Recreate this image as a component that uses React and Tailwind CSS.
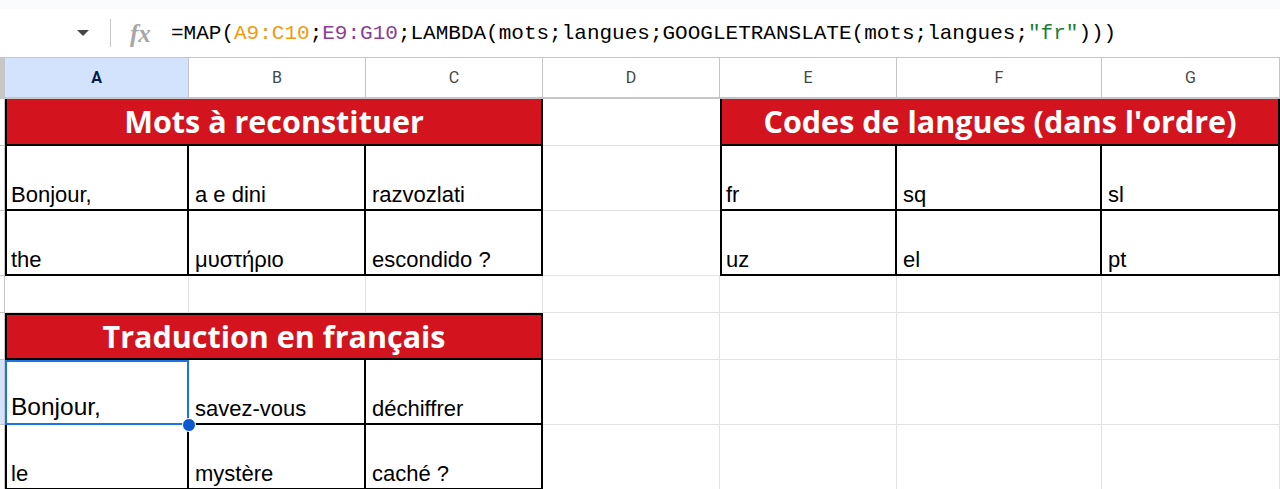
const cols = ["A", "B", "C", "D", "E", "F", "G"];

function Head({ label, active }) {
  return (
    <div
      className={`flex items-center justify-center border-t border-r border-b-2 border-[#c4c7c5] text-[16px] ${
        active ? "bg-[#d3e3fd] text-[#041e49] font-bold" : "bg-white text-[#444746]"
      }`}
      style={{ fontFamily: "Roboto, sans-serif" }}
    >
      {label}
    </div>
  );
}

function RowHead({ active }) {
  return <div className={`border-r border-b border-[#c4c7c5] ${active ? "bg-[#d3e3fd]" : "bg-white"}`} />;
}

function Empty({ noRight }) {
  return <div className={`border-b border-[#e2e2e2] ${noRight ? "" : "border-r"}`} />;
}

function Title({ children, top }) {
  return (
    <div
      className={`col-span-3 flex items-center justify-center bg-[#d3131d] border-black border-l-2 border-r-2 border-b-2 ${
        top ? "border-t-2" : ""
      } text-white font-bold text-[30.5px] leading-none`}
      style={{ fontFamily: '"Open Sans", sans-serif' }}
    >
      {children}
    </div>
  );
}

function Data({ children, first, big }) {
  return (
    <div
      className={`flex flex-1 items-end border-r-2 border-b-2 border-black leading-none text-black ${
        first ? "border-l-2 pl-[4px]" : "pl-[6px]"
      } ${big ? "pb-[4px] text-[24.5px] text-[#222]" : "pb-[3px] text-[22px]"}`}
      style={{ fontFamily: '"Liberation Sans", Arial, sans-serif' }}
    >
      {children}
    </div>
  );
}

export default function App() {
  return (
    <div className="w-[1280px] h-[489px] overflow-hidden bg-white">
      <div className="h-[9px] bg-[#f9fbfd]" />

      {/* formula bar */}
      <div className="h-[48px] flex items-center bg-white">
        <div className="w-[110px] flex justify-end pr-[20px]">
          <svg width="14" height="8" viewBox="0 0 14 8">
            <path d="M1 1 L13 1 L7 7 Z" fill="#444746" />
          </svg>
        </div>
        <div className="w-px h-[28px] bg-[#c7c7c7]" />
        <div
          className="w-[60px] pl-[19px] text-[25px] italic font-bold text-[#a6a6a6] leading-none"
          style={{ fontFamily: '"Liberation Serif", serif' }}
        >
          fx
        </div>
        <div
          className="text-[21px] text-black whitespace-nowrap leading-none"
          style={{ fontFamily: '"Liberation Mono", monospace' }}
        >
          =MAP(<span className="text-[#f29a0c]">A9:C10</span>;<span className="text-[#8a3d9a]">E9:G10</span>;LAMBDA(mots;langues;GOOGLETRANSLATE(mots;langues;<span className="text-[#188038]">"fr"</span>)))
        </div>
      </div>

      {/* sheet */}
      <div className="grid grid-cols-[5px_184px_177px_177px_177px_177px_205px_178px] grid-rows-[42px_47px_65px_65px_37px_47px_65px_65px]">
        {/* header row */}
        <div className="bg-[#c4c7c5]" />
        {cols.map((c) => (
          <Head key={c} label={c} active={c === "A"} />
        ))}

        {/* row 1 */}
        <RowHead />
        <Title>Mots à reconstituer</Title>
        <Empty noRight />
        <Title>Codes de langues (dans l'ordre)</Title>

        {/* row 2 */}
        <RowHead />
        <Data first>Bonjour,</Data>
        <Data>a e dini</Data>
        <Data>razvozlati</Data>
        <Empty noRight />
        <Data first>fr</Data>
        <Data>sq</Data>
        <Data>sl</Data>

        {/* row 3 */}
        <RowHead />
        <Data first>the</Data>
        <Data>μυστήριο</Data>
        <Data>escondido ?</Data>
        <Empty noRight />
        <Data first>uz</Data>
        <Data>el</Data>
        <Data>pt</Data>

        {/* row 4 */}
        <RowHead />
        <Empty />
        <Empty />
        <Empty />
        <Empty />
        <Empty />
        <Empty />
        <Empty />

        {/* row 5 */}
        <RowHead />
        <Title top>Traduction en français</Title>
        <Empty />
        <Empty />
        <Empty />
        <Empty />

        {/* row 6 */}
        <RowHead active />
        <div className="relative flex">
          <Data first big>
            Bonjour,
          </Data>
          <div className="absolute inset-0 border-2 border-[#1a73e8] pointer-events-none z-10" />
          <div className="absolute right-[-7px] bottom-[-7px] w-[14px] h-[14px] rounded-full bg-[#0b57d0] border border-white z-20" />
        </div>
        <Data>savez-vous</Data>
        <Data>déchiffrer</Data>
        <Empty />
        <Empty />
        <Empty />
        <Empty />

        {/* row 7 */}
        <RowHead />
        <Data first>le</Data>
        <Data>mystère</Data>
        <Data>caché ?</Data>
        <Empty />
        <Empty />
        <Empty />
        <Empty />
      </div>
    </div>
  );
}
